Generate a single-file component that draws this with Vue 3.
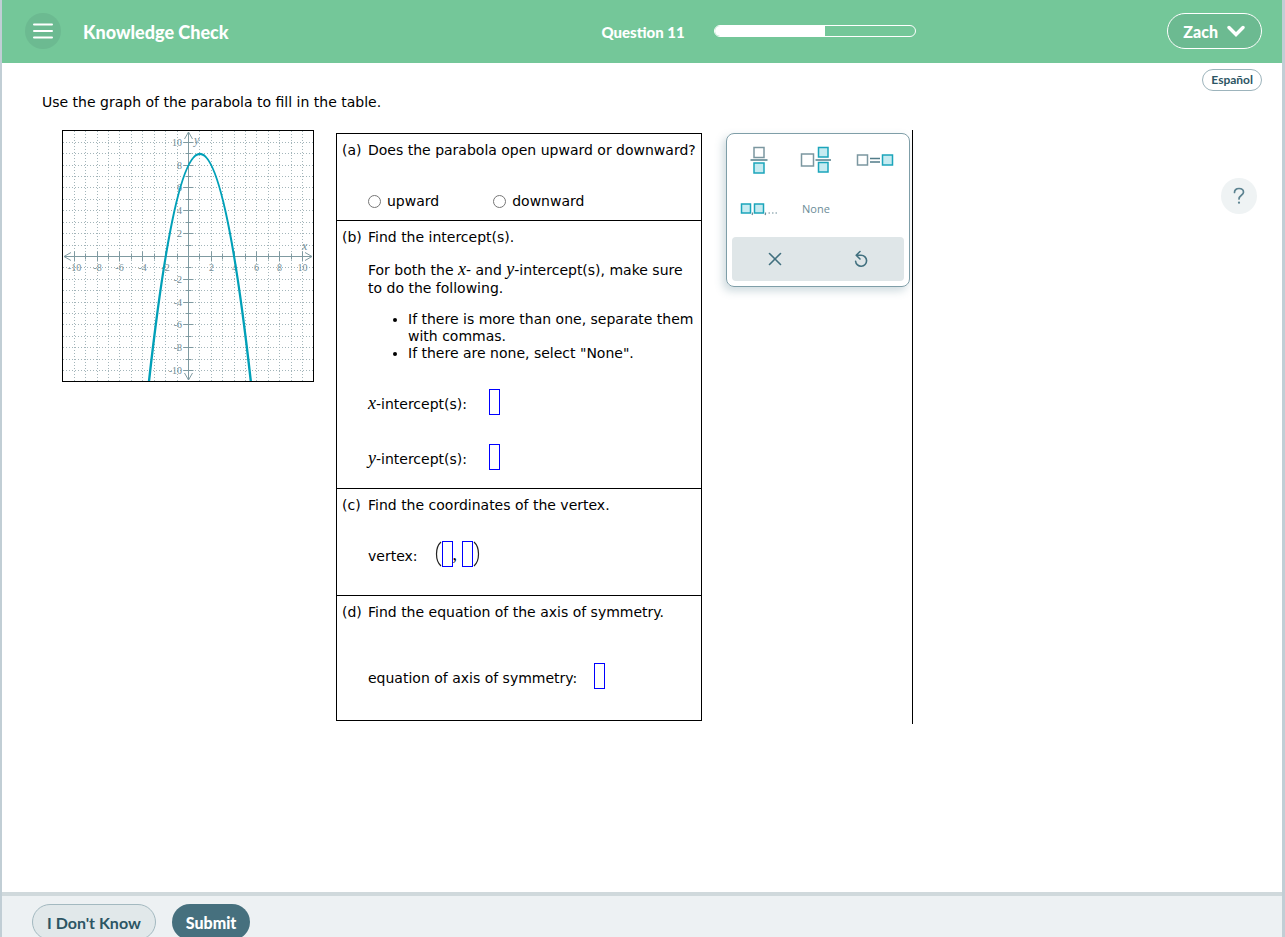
<script setup>
import {computed, ref} from "vue";

const direction = ref('')
const xIntercepts = ref('')
const yIntercepts = ref('')
const vertexX = ref('')
const vertexY = ref('')
const axis = ref('')

const unit = 11.4
const origin = 125.5

function snap(n) {
  return Math.round(origin + n * unit - 0.6) + 0.5
}

const ticks = []
for (let i = -10; i <= 10; i++) {
  ticks.push({n: i, pos: snap(i), size: i % 2 === 0 ? 5 : 3})
}
const marks = ticks.filter(t => t.n !== 0)
const labels = marks.filter(t => t.n % 2 === 0)

// y = 9 - (x - 1)^2 between x = -4 and x = 6
const parabola = computed(() => {
  const px = x => origin + x * unit
  const py = y => origin - y * unit
  return `M${px(-4)} ${py(-16)} Q${px(1)} ${py(34)} ${px(6)} ${py(-16)}`
})
</script>

<template>
<div class="page">
  <header class="topBar">
    <div class="topLeft">
      <button class="menu" aria-label="Menu">
        <svg width="20" height="16" viewBox="0 0 20 16">
          <path d="M1 1.5H19M1 8H19M1 14.5H19" stroke="#fff" stroke-width="2" stroke-linecap="round"/>
        </svg>
      </button>
      <h1 class="title">Knowledge Check</h1>
    </div>
    <div class="topMiddle">
      <span class="question">Question 11</span>
      <div class="progress"><div class="progressFill"></div></div>
    </div>
    <div class="topRight">
      <button class="user">Zach
        <svg width="18" height="12" viewBox="0 0 18 12">
          <path d="M2 2.5L9 9.5L16 2.5" fill="none" stroke="#fff" stroke-width="3.4" stroke-linecap="round"/>
        </svg>
      </button>
    </div>
  </header>

  <main class="main">
    <div class="problem">
      <p class="prompt">Use the graph of the parabola to fill in the table.</p>
      <div class="workspace">
        <svg class="graph" viewBox="0 0 250 250">
          <g class="grid">
            <path v-for="t in marks" :key="'v' + t.n" :d="`M${t.pos} 0V250`"/>
            <path v-for="t in marks" :key="'h' + t.n" :d="`M0 ${t.pos}H250`"/>
          </g>
          <g class="axes">
            <path d="M1 125.5H249M125.5 1V249"/>
            <path v-for="t in marks" :key="'x' + t.n" :d="`M${t.pos} ${125.5 - t.size}V${125.5 + t.size}`"/>
            <path v-for="t in marks" :key="'y' + t.n" :d="`M${125.5 - t.size} ${t.pos}H${125.5 + t.size}`"/>
            <path d="M8 121.5L1 125.5L8 129.5M242 121.5L249 125.5L242 129.5M121.5 8L125.5 1L129.5 8M121.5 242L125.5 249L129.5 242"/>
          </g>
          <g class="axisText">
            <text v-for="t in labels" :key="'lx' + t.n" :x="t.pos" y="140" text-anchor="middle">{{t.n}}</text>
            <text v-for="t in labels" :key="'ly' + t.n" x="119" :y="t.pos + 3.5" text-anchor="end">{{-t.n}}</text>
            <text class="axisName" x="239" y="119">x</text>
            <text class="axisName" x="131" y="13">y</text>
          </g>
          <path class="curve" :d="parabola"/>
        </svg>

        <div class="parts">
          <section class="part partA">
            <span class="mark">(a)</span>
            <div class="body">
              <p>Does the parabola open upward or downward?</p>
              <div class="choices">
                <label class="choice"><input v-model="direction" type="radio" name="direction" value="upward">upward</label>
                <label class="choice"><input v-model="direction" type="radio" name="direction" value="downward">downward</label>
              </div>
            </div>
          </section>
          <section class="part partB">
            <span class="mark">(b)</span>
            <div class="body">
              <p>Find the intercept(s).</p>
              <p class="note">For both the <i>x</i>- and <i>y</i>-intercept(s), make sure to do the following.</p>
              <ul class="rules">
                <li>If there is more than one, separate them with commas.</li>
                <li>If there are none, select "None".</li>
              </ul>
              <div class="intercepts">
                <label for="xInt"><i>x</i>-intercept(s):</label>
                <input id="xInt" v-model="xIntercepts" class="blank" type="text">
                <label for="yInt"><i>y</i>-intercept(s):</label>
                <input id="yInt" v-model="yIntercepts" class="blank" type="text">
              </div>
            </div>
          </section>
          <section class="part partC">
            <span class="mark">(c)</span>
            <div class="body">
              <p>Find the coordinates of the vertex.</p>
              <div class="answer vertex">
                <label for="vertexX">vertex:</label>
                <div class="pair">
                  <svg width="7" height="26" viewBox="0 0 7 26"><path d="M6 1Q1.5 5 1.5 13T6 25" fill="none" stroke="#222" stroke-width="1.2"/></svg>
                  <input id="vertexX" v-model="vertexX" class="blank" type="text">
                  <span class="comma">,</span>
                  <input v-model="vertexY" class="blank" type="text" aria-label="vertex y">
                  <svg width="7" height="26" viewBox="0 0 7 26"><path d="M1 1Q5.5 5 5.5 13T1 25" fill="none" stroke="#222" stroke-width="1.2"/></svg>
                </div>
              </div>
            </div>
          </section>
          <section class="part partD">
            <span class="mark">(d)</span>
            <div class="body">
              <p>Find the equation of the axis of symmetry.</p>
              <div class="answer axis">
                <label for="axis">equation of axis of symmetry:</label>
                <input id="axis" v-model="axis" class="blank" type="text">
              </div>
            </div>
          </section>
        </div>

        <div class="palette">
          <div class="tools">
            <button aria-label="Fraction">
              <svg width="18" height="28" viewBox="0 0 18 28">
                <rect class="box" x="4" y="1.5" width="10" height="10"/>
                <path class="stroke" d="M0.5 14H17.5"/>
                <rect class="box filled" x="4" y="17" width="10" height="10"/>
              </svg>
            </button>
            <button aria-label="Mixed number">
              <svg width="32" height="28" viewBox="0 0 32 28">
                <rect class="box" x="1.5" y="8" width="12" height="12"/>
                <path class="stroke" d="M15.5 14H31"/>
                <rect class="box filled" x="18.5" y="1.5" width="9.5" height="9.5"/>
                <rect class="box filled" x="18.5" y="16.5" width="9.5" height="9.5"/>
              </svg>
            </button>
            <button aria-label="Equation">
              <svg width="38" height="14" viewBox="0 0 38 14">
                <rect class="box" x="1.5" y="2" width="10" height="10"/>
                <path class="stroke" d="M14 5.5H24M14 9H24"/>
                <rect class="box filled" x="26.5" y="2" width="10" height="10"/>
              </svg>
            </button>
            <button aria-label="List">
              <svg width="38" height="14" viewBox="0 0 38 14">
                <rect class="box filled" x="1.5" y="2" width="9" height="9"/>
                <rect class="box filled" x="14.5" y="2" width="9" height="9"/>
                <path class="dots" d="M12.5 10.5V12L12 13M25.5 10.5V12L25 13M28.5 11H30M32 11H33.5M35.5 11H37"/>
              </svg>
            </button>
            <button class="none">None</button>
          </div>
          <div class="actions">
            <button aria-label="Clear">
              <svg width="14" height="14" viewBox="0 0 14 14">
                <path d="M1.5 1.5L12.5 12.5M12.5 1.5L1.5 12.5" stroke="#41707f" stroke-width="1.6" stroke-linecap="round"/>
              </svg>
            </button>
            <button aria-label="Undo">
              <svg width="14" height="18" viewBox="0 0 14 18">
                <path d="M6 1.5L2.2 5.2L6 9M2.5 5.2H7.2A5.5 5.5 0 1 1 1.6 11.2" fill="none" stroke="#41707f" stroke-width="1.6" stroke-linecap="round" stroke-linejoin="round"/>
              </svg>
            </button>
          </div>
        </div>
      </div>
    </div>

    <aside class="side">
      <button class="language">Español</button>
      <button class="help" aria-label="Help">
        <svg width="12" height="18" viewBox="0 0 12 18">
          <path d="M1.5 5.5C1.5 3 3.3 1.5 6 1.5S10.5 3 10.5 5.2C10.5 8.3 6 8.2 6 12" fill="none" stroke="#5b8290" stroke-width="1.7" stroke-linecap="round"/>
          <circle cx="6" cy="15.7" r="1.1" fill="#5b8290"/>
        </svg>
      </button>
    </aside>
  </main>

  <footer class="bottomBar">
    <button class="dontKnow">I Don't Know</button>
    <button class="submit">Submit</button>
  </footer>
</div>
</template>

<style>
body {
  margin: 0;
}
</style>

<style scoped>
* {
  box-sizing: border-box;
}

.page {
  display: flex;
  flex-direction: column;
  height: 100vh;
  overflow: hidden;
  border-left: 2px solid #c1ced5;
  border-right: 3px solid #c1ced5;
  background-color: #fff;
  color: #000;
  font-family: "DejaVu Sans", Verdana, sans-serif;
  font-size: 14px;
  line-height: 17px;
}

button {
  display: flex;
  align-items: center;
  justify-content: center;
  padding: 0;
  border: 0;
  background-color: transparent;
  font-family: Lato, sans-serif;
  cursor: pointer;
}

p {
  margin: 0;
}

.topBar {
  display: grid;
  grid-template-columns: 1fr auto 1fr;
  align-items: center;
  flex: none;
  height: 63px;
  padding: 0 20px 1px 23px;
  background-color: #74c799;
  color: #fff;
  font-family: Lato, sans-serif;
  font-weight: 900;
}

.topLeft {
  display: flex;
  align-items: center;
  gap: 22px;
}

.menu {
  width: 36px;
  height: 36px;
  border-radius: 50%;
  background-color: #6cba91;
}

.title {
  margin: 0;
  padding-top: 2px;
  font-size: 18px;
  font-weight: 900;
}

.topMiddle {
  display: flex;
  align-items: center;
  gap: 29px;
  margin-left: 230px;
  font-size: 15px;
}

.question {
  padding-top: 2px;
}

.progress {
  width: 202px;
  height: 12px;
  border: 1px solid #fff;
  border-radius: 6px;
  overflow: hidden;
}

.progressFill {
  width: 55%;
  height: 100%;
  background-color: #fff;
}

.topRight {
  display: flex;
  justify-content: flex-end;
}

.user {
  gap: 9px;
  height: 36px;
  padding: 0 16px 0 15px;
  border: 1px solid #fff;
  border-radius: 18px;
  background-color: #6cba91;
  color: #fff;
  font-size: 16px;
  font-weight: 900;
}

.main {
  display: flex;
  justify-content: space-between;
  flex: 1;
  min-height: 0;
}

.problem {
  padding: 31px 0 0 40px;
}

.workspace {
  display: flex;
  align-items: flex-start;
  width: fit-content;
  margin-top: 19px;
  padding: 0 2px 3px 20px;
  border-right: 1px solid #000;
}

.graph {
  flex: none;
  width: 252px;
  height: 252px;
  border: 1px solid #000;
}

.grid path {
  stroke: #a3b5ba;
  stroke-dasharray: 1 2;
}

.axes path {
  fill: none;
  stroke: #7f9aa1;
}

.axisText {
  fill: #728d96;
  font-family: "Liberation Serif", serif;
  font-size: 10px;
}

.axisName {
  font-size: 12px;
  font-style: italic;
}

.curve {
  fill: none;
  stroke: #00a0b8;
  stroke-width: 2.4;
}

.parts {
  width: 366px;
  margin: 3px 0 0 22px;
  border: 1px solid #000;
}

.part {
  display: flex;
  padding: 8px 0 0 5px;
}

.part + .part {
  border-top: 1px solid #000;
}

.mark {
  flex: none;
  width: 26px;
}

.body {
  flex: 1;
}

.body i,
.comma {
  font-family: "Liberation Serif", serif;
  font-size: 18px;
  line-height: 16px;
}

.partA {
  padding-bottom: 10px;
}

.choices {
  display: flex;
  gap: 54px;
  margin-top: 34px;
}

.choice {
  display: flex;
  align-items: center;
  gap: 6px;
}

.choice input {
  width: 13px;
  height: 13px;
  margin: 0;
}

.partB {
  padding-bottom: 18px;
}

.note {
  margin-top: 15px;
  padding-right: 8px;
  line-height: 18px;
}

.rules {
  margin: 14px 0 0;
  padding-left: 40px;
}

.intercepts {
  display: grid;
  grid-template-columns: auto 1fr;
  align-items: center;
  gap: 29px 22px;
  margin-top: 27px;
}

.intercepts label,
.answer label {
  padding-top: 4px;
}

.blank {
  width: 11px;
  height: 26px;
  padding: 0;
  border: 1px solid #0000ff;
  background-color: #fff;
  font-size: 14px;
  outline: none;
}

.partC {
  padding-bottom: 28px;
}

.answer {
  display: flex;
  align-items: center;
}

.vertex {
  gap: 17px;
  margin-top: 27px;
}

.pair {
  display: flex;
  align-items: center;
}

.comma {
  width: 9px;
}

.partD {
  padding-bottom: 31px;
}

.axis {
  gap: 17px;
  margin-top: 42px;
}

.palette {
  width: 184px;
  margin: 3px 0 0 24px;
  padding: 1px 5px 5px;
  border: 1px solid #7f9ea8;
  border-radius: 8px;
  box-shadow: -3px 4px 8px rgba(65, 112, 127, 0.25);
}

.tools {
  display: grid;
  grid-template-columns: 54px 60px 1fr;
  grid-auto-rows: 49px;
}

.box {
  fill: #fff;
  stroke: #7b97a0;
  stroke-width: 1.5;
}

.box.filled {
  fill: #c6ebf1;
  stroke: #1ba5bb;
}

.stroke {
  stroke: #527c89;
  stroke-width: 1.5;
}

.dots {
  fill: none;
  stroke: #6b8c97;
  stroke-width: 1.2;
}

.none {
  color: #6b8c97;
  font-family: "Open Sans", sans-serif;
  font-size: 11px;
}

.actions {
  display: grid;
  grid-template-columns: 1fr 1fr;
  height: 44px;
  margin-top: 4px;
  border-radius: 4px;
  background-color: #dfe6e8;
}

.side {
  display: flex;
  flex-direction: column;
  align-items: flex-end;
  gap: 87px;
  padding: 6px 20px 0 0;
}

.language {
  height: 22px;
  padding: 0 8px 2px;
  border: 1px solid #9db4bc;
  border-radius: 11px;
  color: #2c5564;
  font-size: 12px;
  font-weight: 700;
}

.help {
  width: 36px;
  height: 36px;
  margin-right: 5px;
  border-radius: 50%;
  background-color: #eff3f4;
}

.bottomBar {
  display: flex;
  align-items: flex-start;
  gap: 16px;
  flex: none;
  height: 45px;
  padding: 8px 30px 0;
  border-top: 4px solid #d0d9dc;
  background-color: #edf1f3;
}

.bottomBar button {
  flex: none;
  height: 36px;
  border-radius: 18px;
  font-size: 16px;
}

.bottomBar .dontKnow {
  padding: 0 14px;
  border: 1px solid #a3b9c0;
  background-color: #e1e8ea;
  color: #2c5564;
  font-weight: 700;
}

.bottomBar .submit {
  padding: 0 14px;
  background-color: #46707e;
  color: #fff;
  font-weight: 900;
}
</style>
